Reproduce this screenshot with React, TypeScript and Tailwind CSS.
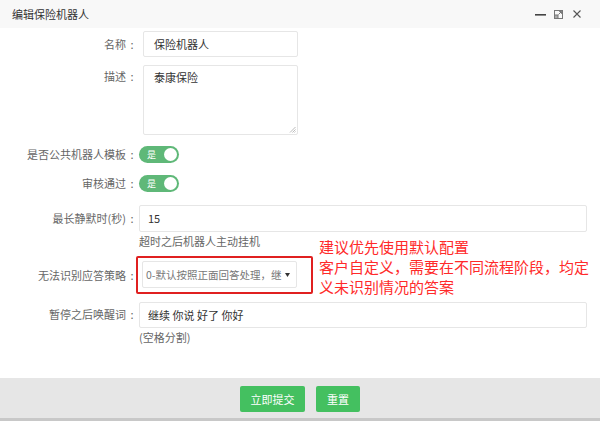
import React from "react";

const font = { fontFamily: '"Noto Sans CJK SC", "Noto Sans", sans-serif' };

function Toggle() {
  return (
    <div className="flex items-center w-[40px] h-[17px] rounded-full bg-[#5fb878] pl-[8px] pr-[2px] justify-between">
      <span className="text-[9px] text-white leading-none">是</span>
      <span className="w-[13px] h-[13px] rounded-full bg-white" />
    </div>
  );
}

function Label({ text, extra = "" }: { text: string; extra?: string }) {
  return (
    <div className={"w-[138px] flex justify-end text-[#666] " + extra}>
      <span>{text}</span>
      <span className="inline-block w-[12px] text-center">:</span>
    </div>
  );
}

export default function App() {
  return (
    <div className="w-[600px] h-[421px] bg-white flex flex-col text-[11px] text-[#555]" style={font}>
      {/* header */}
      <div className="h-[28px] bg-[#f8f8f8] flex items-center justify-between pl-[12px] pr-[19px] shrink-0">
        <span className="text-[11px] text-[#333]">编辑保险机器人</span>
        <div className="flex items-center text-[#555]">
          <svg width="11" height="11" viewBox="0 0 11 11"><rect x="0" y="5" width="11" height="1.6" fill="#444" /></svg>
          <svg className="ml-[8px]" width="9" height="9" viewBox="0 0 9 9" fill="none" stroke="#777" strokeWidth="1">
            <rect x="0.5" y="0.5" width="8" height="8" />
            <rect x="0.5" y="5" width="3.5" height="3.5" fill="#aaa" />
            <path d="M4.5 4.5 L7.5 1.5 M5.2 1.5 H7.5 V3.8" />
          </svg>
          <svg className="ml-[10px]" width="8" height="8" viewBox="0 0 8 8" stroke="#555" strokeWidth="1.1"><path d="M0.5 0.5 L7.5 7.5 M7.5 0.5 L0.5 7.5" /></svg>
        </div>
      </div>

      {/* body */}
      <div className="flex-1 flex flex-col">
        {/* name */}
        <div className="flex mt-[3px] h-[26px] items-center">
          <Label text="名称" />
          <div className="ml-[5px] w-[155px] h-[26px] border border-[#e6e6e6] rounded-[2px] flex items-center px-[10px] text-[#333]">保险机器人</div>
        </div>
        {/* desc */}
        <div className="flex mt-[8px]">
          <Label text="描述" extra="pt-[3px]" />
          <div className="ml-[5px] w-[155px] h-[70px] border border-[#e6e6e6] rounded-[2px] px-[10px] pt-[3px] text-[#333] relative">
            泰康保险
            <svg className="absolute right-[1px] bottom-[1px]" width="7" height="7" viewBox="0 0 7 7" stroke="#aaa" strokeWidth="0.8"><path d="M6.5 1 L1 6.5 M6.5 3.5 L3.5 6.5 M6.5 5.5 L5.5 6.5" /></svg>
          </div>
        </div>
        {/* toggle 1 */}
        <div className="flex mt-[11px] h-[17px] items-center">
          <Label text="是否公共机器人模板" />
          <div className="ml-[1px]"><Toggle /></div>
        </div>
        {/* toggle 2 */}
        <div className="flex mt-[12px] h-[17px] items-center">
          <Label text="审核通过" />
          <div className="ml-[1px]"><Toggle /></div>
        </div>
        {/* silence */}
        <div className="flex mt-[13px]">
          <Label text="最长静默时(秒)" extra="pt-[5px]" />
          <div className="flex flex-col ml-[1px]">
            <div className="w-[448px] h-[27px] border border-[#e6e6e6] rounded-[2px] flex items-center px-[8px] text-[#333]">15</div>
            <div className="text-[#666] leading-[16px] mt-[1px]">超时之后机器人主动挂机</div>
          </div>
        </div>
        {/* strategy */}
        <div className="flex mt-[12px] relative">
          <Label text="无法识别应答策略" extra="pt-[6px]" />
          <div className="ml-[4px] w-[155px] h-[27px] border border-[#e6e6e6] rounded-[2px] flex items-center justify-between pl-[3px] pr-[6px] text-[#777] relative">
            <span className="whitespace-nowrap text-[10.5px]">0-默认按照正面回答处理，继</span>
            <svg width="5" height="4" viewBox="0 0 5 4"><path d="M0 0 H5 L2.5 4 Z" fill="#333" /></svg>
            <div className="absolute left-[-7px] top-[-6px] w-[177px] h-[38px] border-2 border-[#e02020] rounded-[2px]" />
          </div>
          <div className="absolute left-[319px] top-[-24px] text-[15px] leading-[20px] text-[#ff2a2a] whitespace-nowrap">
            <div>建议优先使用默认配置</div>
            <div>客户自定义，需要在不同流程阶段，均定</div>
            <div>义未识别情况的答案</div>
          </div>
        </div>
        {/* pause */}
        <div className="flex mt-[14px]">
          <Label text="暂停之后唤醒词" extra="pt-[4px]" />
          <div className="flex flex-col ml-[1px]">
            <div className="w-[448px] h-[26px] border border-[#e6e6e6] rounded-[2px] flex items-center px-[8px] text-[#333]">继续 你说 好了 你好</div>
            <div className="text-[#666] leading-[16px] mt-[1px]">(空格分割)</div>
          </div>
        </div>
      </div>

      {/* footer */}
      <div className="h-[40px] bg-[#e6e6e6] flex items-start justify-center gap-[11px] pt-[8px] shrink-0">
        <button className="w-[65px] h-[26px] bg-[#44c060] text-white text-[11px] rounded-[2px]">立即提交</button>
        <button className="w-[44px] h-[26px] bg-[#44c060] text-white text-[11px] rounded-[2px]">重置</button>
      </div>
      <div className="h-[3px] bg-[#c8c8c8] shrink-0" />
    </div>
  );
}
